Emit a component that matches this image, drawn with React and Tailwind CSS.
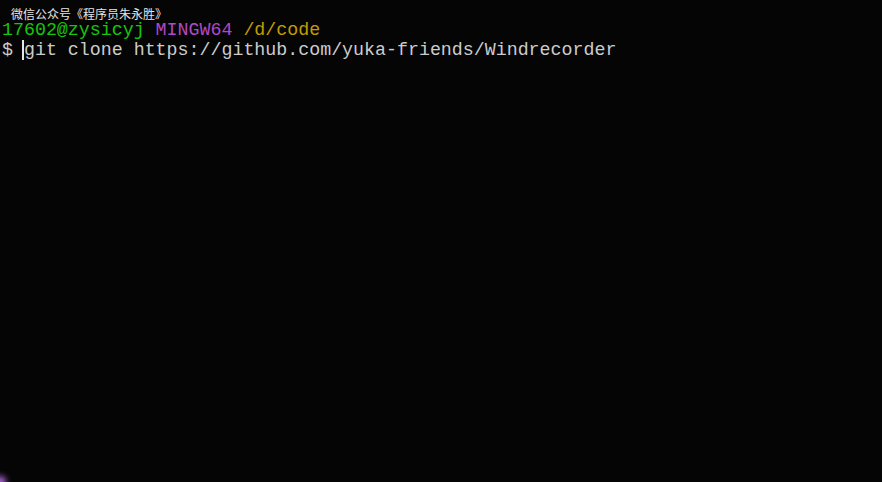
export default function App() {
  const mono = { fontFamily: '"Liberation Mono", "DejaVu Sans Mono", monospace' };

  return (
    <div className="relative w-[882px] h-[482px] overflow-hidden bg-[#050505] flex flex-col">
      {/* watermark */}
      <div
        className="pl-[11px] pt-[8px] h-[20px] text-[12px] leading-[12px] text-[#e6e6e6]"
        style={{ fontFamily: '"Noto Sans CJK SC", "Noto Sans", sans-serif' }}
      >
        微信公众号《程序员朱永胜》
      </div>

      <div className="pl-[2px] text-[18.3px] leading-[20px] whitespace-pre" style={mono}>
        <div>
          <span className="text-[#16c60c]">17602@zysicyj</span>{' '}
          <span className="text-[#b148c6]">MINGW64</span>{' '}
          <span className="text-[#c19c00]">/d/code</span>
        </div>
        <div className="text-[#cccccc]">
          ${' '}
          <span className="border-l-2 border-[#e6e6e6] -ml-[2px]">
            git clone https://github.com/yuka-friends/Windrecorder
          </span>
        </div>
      </div>

      {/* corner glow */}
      <div className="absolute left-[-6px] bottom-[-6px] w-[12px] h-[12px] rounded-full bg-[#b46be0] blur-[3px]" />
    </div>
  );
}
